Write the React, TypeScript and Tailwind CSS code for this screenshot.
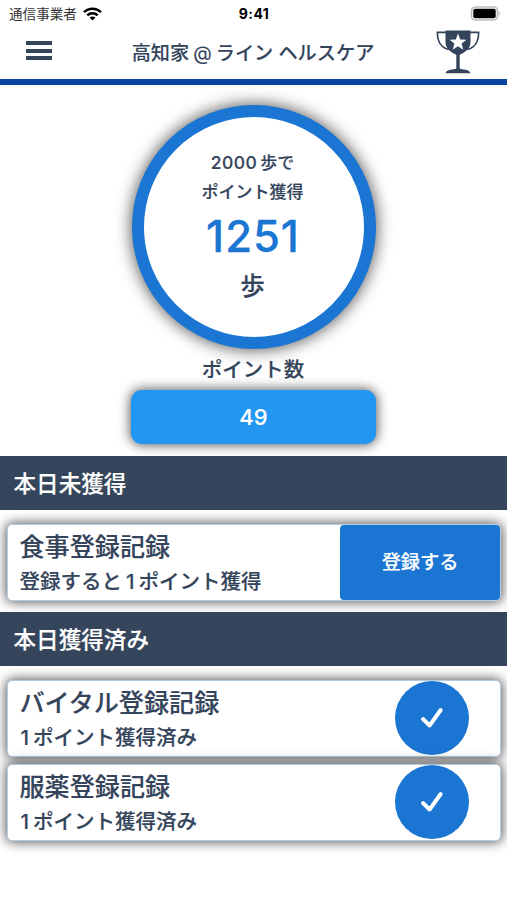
type RecordCardProps = {
    title: string;
    detail: string;
    suffix: string;
    prefix?: string;
    done?: boolean;
};

function StatusBar() {
    return (
        <div className="flex h-[27px] items-center justify-between pl-[9px] pr-[6px] text-black">
            <div className="flex w-[120px] items-center gap-[6px]">
                <span className="text-[13.6px] leading-[28px] text-[#333]">通信事業者</span>
                <svg width="19" height="14" viewBox="0 0 19 14" fill="none" stroke="#000" strokeWidth="2.5">
                    <path d="M1 5.1C5.7.5 13.3.5 18 5.1" />
                    <path d="M4.3 8.4C7.1 5.6 11.9 5.6 14.7 8.4" />
                    <path d="M6.5 10.5C8 9 11 9 12.5 10.5L9.5 13.5Z" fill="#000" stroke="none" />
                </svg>
            </div>
            <span className="-translate-x-px text-[14px] font-bold leading-[27px] tracking-[0.4px]">9:41</span>
            <div className="flex w-[120px] justify-end">
                <svg width="31" height="15" viewBox="0 0 31 15">
                    <rect x="1.5" y="1" width="26" height="13" rx="4" fill="#fff" stroke="#bdbdbd" strokeWidth="1.7" />
                    <rect x="3.3" y="2.8" width="22.4" height="9.4" rx="2" fill="#000" />
                    <path d="M28.7 5.5Q31 7.5 28.7 9.5Z" fill="#aaa" />
                </svg>
            </div>
        </div>
    );
}

function Trophy() {
    return (
        <svg width="44" height="44" viewBox="0 0 44 44" fill="none">
            <path d="M10 2.4H1.4C1.4 11 5 18.5 14 19.5" stroke="#34445b" strokeWidth="1.7" />
            <path d="M34 2.4H42.6C42.6 11 39 18.5 30 19.5" stroke="#34445b" strokeWidth="1.7" />
            <path
                d="M9.5.5H34.5V12C34.5 18 30 22 23.7 24.8V38.5C26 40 34 39 34.5 43.3H9.5C10 39 18 40 20.3 38.5V24.8C14 22 9.5 18 9.5 12Z"
                fill="#34445b"
            />
            <path d="M22 3.5L24.2 9.4L30.5 9.7L25.6 13.6L27.3 19.8L22 16.3L16.7 19.8L18.4 13.6L13.5 9.7L19.8 9.4Z" fill="#fff" />
        </svg>
    );
}

function Header() {
    return (
        <header className="flex h-[58px] items-center justify-between border-b-[6px] border-[#0a43a0] pl-[26px] pr-[27px]">
            <button className="flex w-[44px] flex-col gap-[3.5px] pb-[5px]" aria-label="メニュー">
                <span className="h-[4px] w-[26px] bg-[#34445b]" />
                <span className="h-[4px] w-[26px] bg-[#34445b]" />
                <span className="h-[4px] w-[26px] bg-[#34445b]" />
            </button>
            <h1 className="whitespace-nowrap text-[19.2px] font-medium leading-[47px] [-webkit-text-stroke:0.1px]">
                高知家<span className="mx-[4px] font-normal">@</span>ライン ヘルスケア
            </h1>
            <div className="pb-[3px]">
                <Trophy />
            </div>
        </header>
    );
}

function SectionTitle({ children }: { children: string }) {
    return (
        <h2 className="h-[54px] bg-[#35455c] pl-[13.5px] text-[22.6px] font-medium leading-[55px] text-white [-webkit-text-stroke:0.15px]">
            {children}
        </h2>
    );
}

function RecordCard({ title, detail, prefix, suffix, done }: RecordCardProps) {
    return (
        <div className="ml-[7px] mr-[6px] flex h-[77px] justify-between rounded-[5px] border border-[#b5cbe0] bg-white shadow-[0_0_12px_1px_rgba(0,0,0,0.68)]">
            <div className="pl-[11.5px] pt-[4px] font-medium [-webkit-text-stroke:0.15px]">
                <p className="text-[25.1px] leading-[36px]">{title}</p>
                <p className="text-[20.5px] leading-[34px]">
                    {prefix}
                    <span className={prefix ? "ml-[4px] mr-[4px]" : "ml-px mr-[4px]"}>{detail}</span>
                    {suffix}
                </p>
            </div>
            {done ? (
                <div className="mr-[31px] flex size-[74px] items-center justify-center rounded-full bg-[#1b75d3]">
                    <svg width="26" height="26" viewBox="0 0 26 26" fill="none">
                        <path d="M4 14L10.6 20.5L21.7 5" stroke="#fff" strokeWidth="3.9" strokeLinecap="round" strokeLinejoin="round" />
                    </svg>
                </div>
            ) : (
                <button className="w-[160px] rounded-[4px] bg-[#1b75d3] text-[19.2px] font-medium text-white [-webkit-text-stroke:0.2px]">
                    登録する
                </button>
            )}
        </div>
    );
}

export default function App() {
    return (
        <div className="h-[900px] w-full overflow-hidden bg-white font-['Inter','Noto_Sans_CJK_JP',sans-serif] text-[#34445b]">
            <StatusBar />
            <Header />

            <main>
                <section className="flex flex-col items-center pt-[20px] font-medium [-webkit-text-stroke:0.15px]">
                    <div className="flex size-[244px] flex-col items-center rounded-full border-[12px] border-[#1b75d3] bg-white pt-[31px] shadow-[0_0_16px_1px_rgba(0,0,0,0.65)]">
                        <p className="-ml-[2px] text-[17px] leading-[29px]">
                            <span className="mr-[3px] text-[17.5px] tracking-[0.4px]">2000</span>歩で
                        </p>
                        <p className="-ml-[2px] text-[17px] leading-[29px]">ポイント獲得</p>
                        <p className="-ml-[1px] text-[43.5px] leading-[59px] tracking-[1px] text-[#1b75d3] [-webkit-text-stroke:0.3px]">1251</p>
                        <p className="-ml-[2px] text-[24.5px] leading-[41px]">歩</p>
                    </div>
                    <p className="-ml-[1px] text-[20.5px] leading-[41px]">ポイント数</p>
                    <div className="h-[54px] w-[245px] rounded-[11px] bg-[#2196f3] text-center text-[22px] leading-[54px] text-white shadow-[0_0_12px_1px_rgba(0,0,0,0.65)]">
                        49
                    </div>
                </section>

                <section className="pt-[12px]">
                    <SectionTitle>本日未獲得</SectionTitle>
                    <div className="pt-[13.5px]">
                        <RecordCard title="食事登録記録" prefix="登録すると" detail="1" suffix="ポイント獲得" />
                    </div>
                </section>

                <section className="pt-[11.5px]">
                    <SectionTitle>本日獲得済み</SectionTitle>
                    <div className="flex flex-col gap-[7px] pt-[14px]">
                        <RecordCard title="バイタル登録記録" detail="1" suffix="ポイント獲得済み" done />
                        <RecordCard title="服薬登録記録" detail="1" suffix="ポイント獲得済み" done />
                    </div>
                </section>
            </main>
        </div>
    );
}
